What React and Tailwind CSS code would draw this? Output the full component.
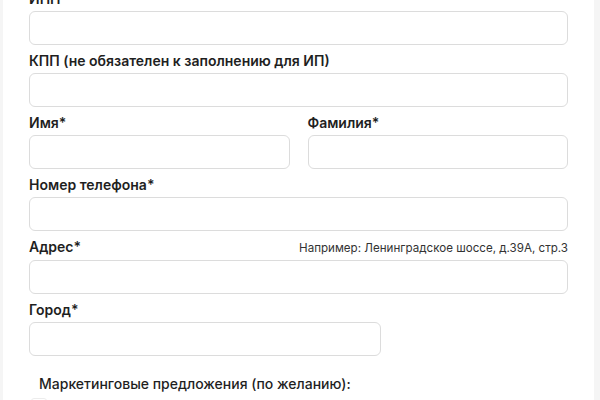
export default function App() {
  const label = "block text-[14px] leading-[20px] font-semibold text-[#1f1f1f] mb-[2px]";
  const input = "block w-full h-[34px] rounded-[6px] border border-[#dcdcdc] bg-white";
  return (
    <div className="flex w-[600px] h-[400px] overflow-hidden bg-white" style={{ fontFamily: "Inter, 'Noto Sans', sans-serif" }}>
      <div className="w-[3px] shrink-0 bg-[#f5f5f5]" />
      <div className="flex-1 px-[26px]">
        <div className="mt-[-11px] flex flex-col gap-[6px]">
          <div>
            <label className={label}>ИНН</label>
            <div className={input} />
          </div>
          <div>
            <label className={label}>КПП (не обязателен к заполнению для ИП)</label>
            <div className={input} />
          </div>
          <div className="grid grid-cols-2 gap-[18px]">
            <div>
              <label className={label}>Имя*</label>
              <div className={input} />
            </div>
            <div>
              <label className={label}>Фамилия*</label>
              <div className={input} />
            </div>
          </div>
          <div>
            <label className={label}>Номер телефона*</label>
            <div className={input} />
          </div>
          <div>
            <div className="flex items-baseline justify-between mb-[2px]">
              <span className="text-[14px] leading-[20px] font-semibold text-[#1f1f1f]">Адрес*</span>
              <span className="text-[11.6px] leading-[20px] text-[#333]">Например: Ленинградское шоссе, д.39А, стр.3</span>
            </div>
            <div className={input} />
          </div>
          <div>
            <label className={label}>Город*</label>
            <div className="block w-[352px] h-[34px] rounded-[6px] border border-[#dcdcdc] bg-white" />
          </div>
        </div>
        <div className="mt-[18px] pl-[10px] text-[14px] leading-[20px] font-medium text-[#1f1f1f]">
          Маркетинговые предложения (по желанию):
        </div>
        <div className="mt-[4px] pl-[2px] flex items-center gap-2">
          <div className="w-[16px] h-[16px] rounded-[3px] border border-[#ececec]" />
        </div>
      </div>
      <div className="w-[6px] shrink-0 bg-[#f5f5f5]" />
    </div>
  );
}
